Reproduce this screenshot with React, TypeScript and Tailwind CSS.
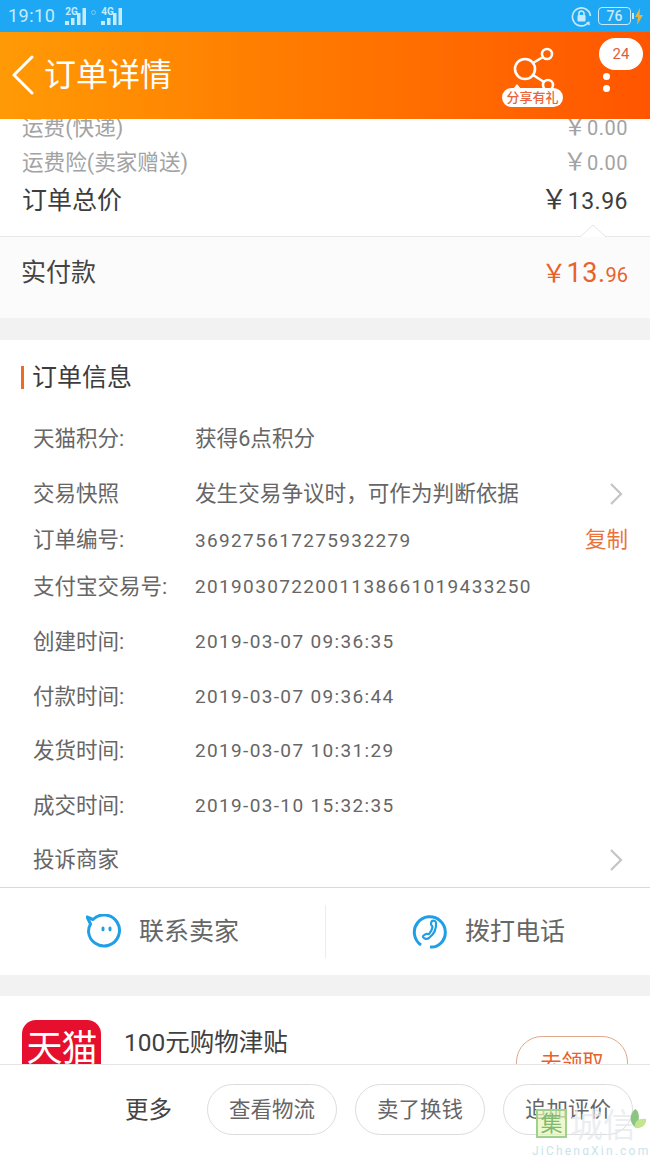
const cjk = "font-['Roboto','Noto_Sans_CJK_SC',sans-serif]"
const YEN = '\uFFE5'

function Signal({ label, dim }: { label: string; dim?: boolean }) {
  return (
    <div className="relative h-[24px] w-[22px]">
      {dim ? <span className="absolute -left-[10px] top-[6px] h-[5px] w-[5px] rounded-full border border-[#7cc9f3]" /> : null}
      <svg width="22" height="24" viewBox="0 0 22 24" className="absolute left-0 top-0">
        <rect x="0" y="17" width="4" height="4" fill="#c4ecfc" />
        <rect x="6" y="14" width="3.500" height="7" fill="#c4ecfc" />
        <rect x="12" y="9" width="3.500" height="12" fill="#c4ecfc" />
        <rect x="17.500" y="4" width="3.500" height="17" fill="#c4ecfc" />
      </svg>
      <span className="absolute left-0 top-[3px] text-[10px] leading-[10px] font-bold text-[#c4ecfc]">
        {label}
      </span>
    </div>
  )
}

function StatusBar() {
  return (
    <div className="flex h-[32px] items-center bg-[#1ea8f4] pl-[8px] pr-[7px]">
      <span className="text-[18px] leading-none tracking-[0.5px] text-[#c8eafc]">19:10</span>
      <div className="ml-[10px] flex gap-[14px]">
        <Signal label="2G" />
        <Signal label="4G" dim />
      </div>
      <div className="ml-auto flex items-center">
        <svg width="21" height="21" viewBox="0 0 21 21" fill="none" stroke="#c8eafc" strokeWidth="1.6">
          <path d="M17.5 16.5A9 9 0 1 1 19.4 10" />
          <path d="M15.5 17.5l2.2-1 .4 2.6" />
          <rect x="6.5" y="9" width="8" height="6.5" rx="1" fill="#c8eafc" stroke="none" />
          <path d="M8 9V7.5a2.5 2.5 0 0 1 5 0V9" />
        </svg>
        <div className="ml-[6px] flex h-[18px] w-[33px] items-center justify-center rounded-[4px] border border-[#c8eafc] text-[14px] leading-none font-medium text-[#c8eafc]">
          76
        </div>
        <div className="ml-[1px] h-[6px] w-[2px] bg-[#c8eafc]" />
        <svg width="8" height="17" viewBox="0 0 8 17" className="ml-[1px]">
          <path d="M5 0L0 9h3l-1 8 6-10H4.500z" fill="#e8b53a" />
        </svg>
      </div>
    </div>
  )
}

function Header() {
  return (
    <div className="relative flex h-[87px] items-center bg-gradient-to-r from-[#ff9a05] via-[#ff7700] to-[#ff5500] pb-[2px]">
      <svg width="24" height="40" viewBox="0 0 24 40" fill="none" stroke="#fff" strokeWidth="3" strokeLinecap="round" strokeLinejoin="round" className="ml-[11px]">
        <path d="M21 2L3 20l18 18" />
      </svg>
      <h1 className="ml-[9px] text-[32px] leading-none font-normal text-white">订单详情</h1>
      <svg width="52" height="46" viewBox="0 0 52 46" fill="none" stroke="#fff" strokeWidth="2.600" className="absolute left-[507px] top-[14px]">
        <circle cx="18" cy="23" r="10" />
        <circle cx="40" cy="8" r="5" />
        <circle cx="41" cy="39" r="5" />
        <path d="M26 17L36 11M26 29l11 7" />
      </svg>
      <span className="absolute left-[502px] top-[56px] flex h-[19px] w-[61px] items-center justify-center rounded-full bg-white text-[13px] leading-none font-medium text-[#e8643c]">
        分享有礼
      </span>
      <span className="absolute left-[513px] top-[52px] h-0 w-0 border-x-[4px] border-b-[5px] border-x-transparent border-b-white" />
      <span className="absolute left-[599px] top-[6px] flex h-[32px] w-[44px] items-center justify-center rounded-full bg-white text-[15px] leading-none text-[#d9603c]">
        24
      </span>
      <span className="absolute left-[603px] top-[41px] h-[7px] w-[7px] rounded-full bg-white" />
      <span className="absolute left-[603px] top-[53px] h-[7px] w-[7px] rounded-full bg-white" />
    </div>
  )
}

function PriceSummary() {
  return (
    <div className="bg-white">
      <div className="-mt-[7px] flex h-[32px] items-center justify-between pl-[22px] pr-[22px] text-[21.600px] leading-none text-[#a3a3a3]">
        <span>运费(快递)</span>
        <span className="flex items-baseline pb-[2px]">
          <span className="text-[24px]">{YEN}</span>
          <span className="text-[20px] tracking-[0.5px]">0.00</span>
        </span>
      </div>
      <div className="mt-[3px] flex h-[32px] items-center justify-between pl-[22px] pr-[22px] text-[21.600px] leading-none text-[#a3a3a3]">
        <span>运费险(卖家赠送)</span>
        <span className="flex items-baseline pb-[2px]">
          <span className="text-[24px]">{YEN}</span>
          <span className="text-[20px] tracking-[0.5px]">0.00</span>
        </span>
      </div>
      <div className="flex h-[57px] items-start justify-between pl-[22px] pr-[22px] pt-[9px] text-[#3d3d3d]">
        <span className="text-[25px] leading-none">订单总价</span>
        <span className="-mt-[1px] flex items-baseline leading-none">
          <span className="text-[27px]">{YEN}</span>
          <span className="text-[23px] tracking-[0.5px]">13.96</span>
        </span>
      </div>
      <div className="relative h-[82px] border-t border-[#e8e8e8] bg-[#fbfbfb]">
        <svg width="26" height="13" viewBox="0 0 26 13" fill="none" className="absolute left-[580px] -top-[13px]">
          <path d="M0 13L13 1l13 12" fill="#fff" stroke="#e4e4e4" />
        </svg>
        <div className="flex h-[70px] items-center justify-between pl-[21px] pr-[22px]">
          <span className="text-[25px] leading-none text-[#444]">实付款</span>
          <span className="flex items-baseline pt-[2px] leading-none text-[#e9622a]">
            <span className="text-[25px]">{YEN}</span>
            <span className="text-[27px] tracking-[0.5px]">13.</span>
            <span className="text-[20px]">96</span>
          </span>
        </div>
      </div>
    </div>
  )
}

const ROWS = [
  { label: '天猫积分:', value: '获得6点积分', height: 'h-[55px]', cjkValue: true },
  { label: '交易快照', value: '发生交易争议时\uFF0C可作为判断依据', height: 'h-[55px]', cjkValue: true, chevron: true },
  { label: '订单编号:', value: '369275617275932279', height: 'h-[38px]', copy: true },
  { label: '支付宝交易号:', value: '2019030722001138661019433250', height: 'h-[55px]' },
  { label: '创建时间:', value: '2019-03-07 09:36:35', height: 'h-[55px]' },
  { label: '付款时间:', value: '2019-03-07 09:36:44', height: 'h-[54.5px]' },
  { label: '发货时间:', value: '2019-03-07 10:31:29', height: 'h-[54.5px]' },
  { label: '成交时间:', value: '2019-03-10 15:32:35', height: 'h-[54.5px]' },
]

function Chevron() {
  return (
    <svg width="14" height="22" viewBox="0 0 14 22" fill="none" stroke="#c4c4c4" strokeWidth="2.200" className="absolute left-[609px]">
      <path d="M2 1l10 10L2 21" />
    </svg>
  )
}

function OrderInfo() {
  return (
    <div className="bg-white">
      <div className="flex h-[73px] items-center pt-[2px]">
        <span className="ml-[21px] h-[23px] w-[3px] bg-[#f26a1b]" />
        <h2 className="ml-[8px] text-[25px] leading-none font-normal text-[#3c3c3c]">订单信息</h2>
      </div>
      <div className="-mt-[2px]">
        {ROWS.map((row) => (
          <div key={row.label} className={`relative flex items-center pl-[33px] text-[#666] ${row.height}`}>
            <span className="w-[162px] shrink-0 whitespace-nowrap text-[21.500px] leading-none">{row.label}</span>
            <span className={`whitespace-nowrap leading-none ${row.cjkValue ? 'text-[21.600px]' : 'text-[19px] tracking-[1.350px]'}`}>
              {row.value}
            </span>
            {row.chevron ? <Chevron /> : null}
            {row.copy ? (
              <span className="absolute right-[22px] text-[21.500px] leading-none text-[#e9733a]">复制</span>
            ) : null}
          </div>
        ))}
        <div className="relative flex h-[54.5px] items-center pl-[33px] text-[21.500px] leading-none text-[#666]">
          投诉商家
          <Chevron />
        </div>
      </div>
    </div>
  )
}

function ContactBar() {
  return (
    <div className="flex h-[88px] border-t border-[#d9d9d9] bg-white">
      <div className="flex w-[325px] items-center pl-[86px]">
        <svg width="36" height="36" viewBox="0 0 36 36" fill="none" stroke="#1e9fe6" strokeWidth="3">
          <path d="M7 5.500a15.500 15.500 0 1 1-4.500 12c0-3 .8-5.500 2-7.500L1 3z" strokeLinejoin="round" />
          <ellipse cx="17" cy="15" rx="1.600" ry="2.400" fill="#1e9fe6" stroke="none" />
          <ellipse cx="24" cy="15" rx="1.600" ry="2.400" fill="#1e9fe6" stroke="none" />
        </svg>
        <span className="ml-[17px] text-[25px] leading-none text-[#666]">联系卖家</span>
      </div>
      <div className="my-[17px] w-px bg-[#ececec]" />
      <div className="flex flex-1 items-center pl-[86px]">
        <svg width="36" height="36" viewBox="0 0 36 36" fill="none" stroke="#1e9fe6" strokeWidth="3">
          <path d="M9 31A15.500 15.500 0 1 1 29 29c-3 3-7 4.500-11 4" />
          <path d="M20 7c2-1 4 0 4 2 .5 5-2 11-7 15-2 1.500-5 1-6-1-.5-1 1-2 3-3 1.500-.5 2 .5 3 0 2-2 3-4 3.500-7 0-1-1.500-1.500-1.500-3 0-1 .5-2.500 1-3z" strokeWidth="2.200" />
        </svg>
        <span className="ml-[17px] text-[25px] leading-none text-[#666]">拨打电话</span>
      </div>
    </div>
  )
}

function Coupon() {
  return (
    <div className="relative h-[100px] bg-white">
      <div className="absolute left-[22px] top-[24px] flex h-[80px] w-[79px] items-start justify-center rounded-[14px] bg-[#e60f2d] pt-[11px]">
        <span className="text-[36px] leading-none tracking-[-1px] whitespace-nowrap text-white">天猫</span>
      </div>
      <span className="absolute left-[124px] top-[35px] text-[24.500px] leading-none text-[#404040]">100元购物津贴</span>
      <span className="absolute left-[516px] top-[40px] flex h-[54px] w-[112px] items-start justify-center rounded-[26px] border border-[#e2a88c] pt-[15px] text-[21px] leading-none text-[#e8602a]">
        去领取
      </span>
    </div>
  )
}

function Watermark() {
  return (
    <div className="pointer-events-none absolute left-[530px] top-[1105px] h-[50px] w-[120px]">
      <div className="absolute left-[6px] top-[4px] flex h-[29px] w-[31px] items-center justify-center border-[2px] border-[#9fd08f] bg-[#e6f5b8]/70 text-[22px] leading-none text-[#7fb86f]">
        集
      </div>
      <span className="absolute left-[40px] top-[4px] whitespace-nowrap text-[33px] leading-none text-[#e6eaec]/80">城信</span>
      <svg width="22" height="26" viewBox="0 0 22 26" className="absolute left-[96px] top-[3px]">
        <path d="M9 1c5 2 5 12 1 19C3 15 3 7 9 1z" fill="#8cc583" />
        <path d="M9 20c-1-5 2-10 11-9 1 5-4 10-11 9z" fill="#c2e58e" />
      </svg>
      <span className="absolute left-[2px] top-[40px] whitespace-nowrap text-[12px] leading-none tracking-[2.200px] text-[#c8e4ea]">
        JiChengXin.com
      </span>
    </div>
  )
}

export default function App() {
  return (
    <div className={`relative h-[1155px] w-[650px] overflow-hidden bg-[#f2f2f2] ${cjk}`}>
      <StatusBar />
      <Header />
      <div className="h-[945px] overflow-hidden">
        <PriceSummary />
        <div className="h-[22px]" />
        <OrderInfo />
        <ContactBar />
        <div className="h-[21px]" />
        <Coupon />
      </div>
      <div className="flex h-[91px] items-start border-t border-[#e4e4e4] bg-white pl-[125px] pt-[19px]">
        <span className="mt-[15px] text-[23.500px] leading-none text-[#444]">更多</span>
        <div className="ml-[35px] flex gap-[18px]">
          {['查看物流', '卖了换钱', '追加评价'].map((label) => (
            <span
              key={label}
              className="flex h-[51px] w-[130px] items-center justify-center rounded-full border border-[#dcdcdc] text-[21.500px] leading-none text-[#666]"
            >
              {label}
            </span>
          ))}
        </div>
      </div>
      <Watermark />
    </div>
  )
}
